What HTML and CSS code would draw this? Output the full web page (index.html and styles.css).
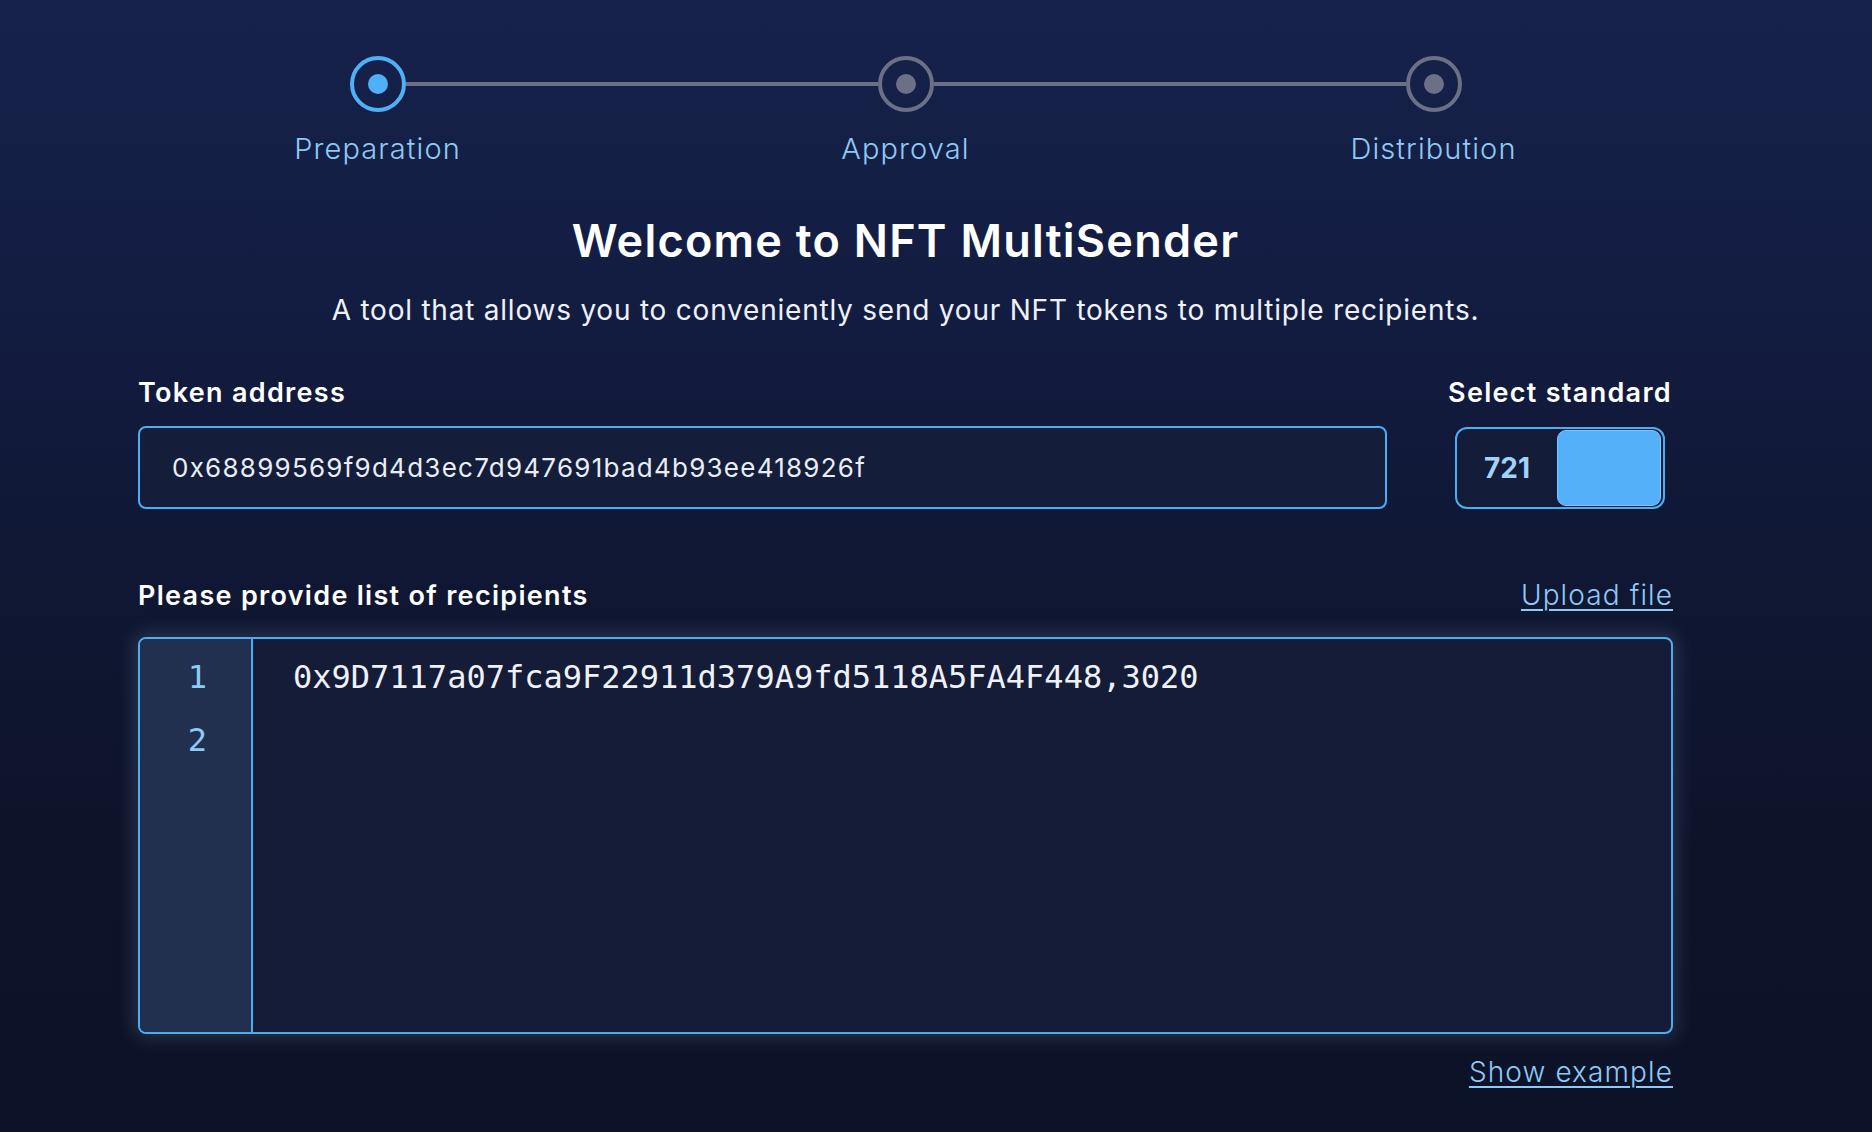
FILE: index.html
```html
<!DOCTYPE html>
<html lang="en">
<head>
<meta charset="utf-8">
<title>NFT MultiSender</title>
<link rel="stylesheet" href="styles.css">
</head>
<body>
<main class="page">
  <div class="stepper">
    <div class="step active">
      <div class="ring"><span class="dot"></span></div>
      <span class="step-label">Preparation</span>
    </div>
    <div class="connector"></div>
    <div class="step">
      <div class="ring"><span class="dot"></span></div>
      <span class="step-label">Approval</span>
    </div>
    <div class="connector"></div>
    <div class="step">
      <div class="ring"><span class="dot"></span></div>
      <span class="step-label">Distribution</span>
    </div>
  </div>

  <h1 class="title">Welcome to NFT MultiSender</h1>
  <p class="subtitle">A tool that allows you to conveniently send your NFT tokens to multiple recipients.</p>

  <div class="token-row">
    <div class="field grow">
      <span class="field-label">Token address</span>
      <div class="input">0x68899569f9d4d3ec7d947691bad4b93ee418926f</div>
    </div>
    <div class="field standard">
      <span class="field-label">Select standard</span>
      <div class="toggle">
        <span class="toggle-value">721</span>
        <span class="knob"></span>
      </div>
    </div>
  </div>

  <div class="list-head">
    <span class="field-label">Please provide list of recipients</span>
    <a class="link" href="#">Upload file</a>
  </div>

  <div class="editor">
    <div class="gutter">
      <div class="ln">1</div>
      <div class="ln">2</div>
    </div>
    <div class="code">
      <div class="code-line">0x9D7117a07fca9F22911d379A9fd5118A5FA4F448,3020</div>
      <div class="code-line"></div>
    </div>
  </div>

  <div class="foot">
    <a class="link" href="#">Show example</a>
  </div>
</main>
</body>
</html>
```

FILE: styles.css
```css
* { box-sizing: border-box; }

html, body {
  margin: 0;
  padding: 0;
}

body {
  min-height: 1132px;
  background: linear-gradient(180deg, #16224b 0%, #131d42 25%, #0f1734 50%, #0d1429 75%, #0c1328 100%);
  font-family: Inter, "Noto Sans", sans-serif;
  color: #ffffff;
}

.page {
  width: 1535px;
  margin-left: 138px;
  padding-top: 56px;
  display: flex;
  flex-direction: column;
}

/* Stepper */
.stepper {
  align-self: center;
  width: 1112px;
  display: flex;
  align-items: flex-start;
}

.step {
  width: 56px;
  display: flex;
  flex-direction: column;
  align-items: center;
}

.ring {
  width: 56px;
  height: 56px;
  border-radius: 50%;
  border: 4px solid #6b7086;
  display: flex;
  align-items: center;
  justify-content: center;
}

.dot {
  width: 20px;
  height: 20px;
  border-radius: 50%;
  background: #6b7086;
}

.step.active .ring { border-color: #4fb0f8; }
.step.active .dot { background: #4fb0f8; }

.connector {
  flex: 1;
  height: 4px;
  margin-top: 26px;
  background: #6b7086;
}

.step-label {
  margin-top: 19px;
  white-space: nowrap;
  font-size: 29px;
  line-height: 36px;
  font-weight: 300;
  color: #8fc9f5;
  letter-spacing: 1.1px;
}

/* Heading */
.title {
  margin: 47px 0 0;
  text-align: center;
  font-size: 45px;
  line-height: 54px;
  font-weight: 600;
  letter-spacing: 1.25px;
}

.subtitle {
  margin: 25px 0 0;
  text-align: center;
  font-size: 28px;
  line-height: 34px;
  font-weight: 400;
  letter-spacing: 0.78px;
  color: #eef1f7;
}

/* Token row */
.token-row {
  margin-top: 49px;
  display: flex;
  gap: 60px;
}

.field {
  display: flex;
  flex-direction: column;
}

.field.grow { flex: 1; }

.field.standard {
  width: 226px;
  align-items: center;
}

.field-label {
  font-size: 27px;
  line-height: 33px;
  font-weight: 600;
  letter-spacing: 1.3px;
  white-space: nowrap;
}

.input {
  margin-top: 17px;
  height: 83px;
  border: 2px solid #4eacf2;
  border-radius: 8px;
  background: #141d3a;
  display: flex;
  align-items: center;
  padding-left: 32px;
  font-size: 26px;
  font-weight: 400;
  letter-spacing: 1.25px;
  color: #e9edf5;
}

.toggle {
  margin-top: 18px;
  width: 210px;
  height: 82px;
  border: 2px solid #4eacf2;
  border-radius: 12px;
  background: #131c38;
  display: flex;
  align-items: center;
  padding: 1px 2px 1px 0;
}

.toggle-value {
  flex: 1;
  text-align: center;
  font-size: 28px;
  font-weight: 700;
  color: #a3d2f8;
}

.knob {
  width: 104px;
  height: 76px;
  border-radius: 9px;
  background: #54b0f8;
  border: 1px solid #7cc4fa;
}

/* List header */
.list-head {
  margin-top: 70px;
  display: flex;
  justify-content: space-between;
  align-items: baseline;
}

.link {
  font-size: 28px;
  line-height: 33px;
  font-weight: 300;
  color: #8fc9f5;
  letter-spacing: 1.1px;
  text-decoration: underline;
  text-decoration-thickness: 2px;
  text-underline-offset: 4px;
}

/* Editor */
.editor {
  margin-top: 25px;
  height: 397px;
  border: 2px solid #4eacf2;
  border-radius: 8px;
  background: #141c37;
  display: flex;
  overflow: hidden;
  box-shadow: 0 0 18px 4px rgba(140, 160, 200, 0.22);
}

.gutter {
  width: 113px;
  background: #21304f;
  border-right: 2px solid #4eacf2;
  padding-top: 7px;
  text-align: center;
}

.ln, .code-line {
  font-family: "DejaVu Sans Mono", "Liberation Mono", monospace;
  font-size: 32px;
  line-height: 63px;
  height: 63px;
}

.ln {
  color: #8fc9f5;
  padding-left: 4px;
}

.code {
  flex: 1;
  padding: 7px 0 0 40px;
  color: #eef1f7;
}

.foot {
  margin-top: 22px;
  display: flex;
  justify-content: flex-end;
}
```
